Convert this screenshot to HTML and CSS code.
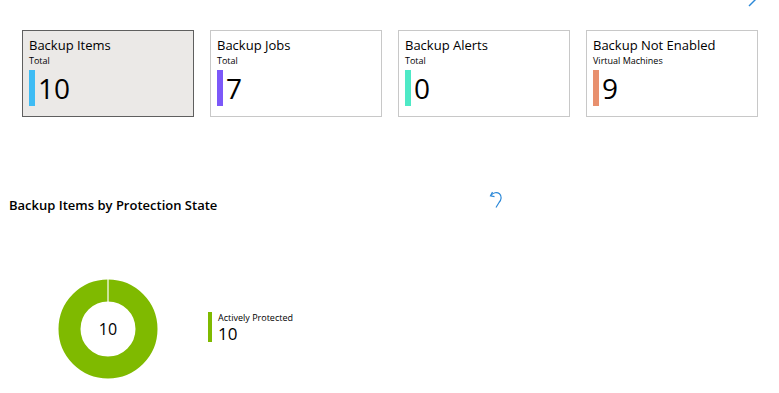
FILE: index.html
```html
<!DOCTYPE html>
<html lang="en">
<head>
  <meta charset="UTF-8">
  <title>Backup Dashboard</title>
  <link rel="stylesheet" href="styles.css">
</head>
<body>
  <div class="toolbar">
    <svg class="edit-icon" width="14" height="14" viewBox="0 0 14 14">
      <path d="M1 13 L13 1" stroke="#2b88d8" stroke-width="1.4" fill="none"/>
    </svg>
  </div>

  <div class="tiles">
    <div class="tile selected">
      <div class="tile-title">Backup Items</div>
      <div class="tile-sub">Total</div>
      <div class="tile-value">
        <span class="bar bar-blue"></span>
        <span class="number">10</span>
      </div>
    </div>
    <div class="tile">
      <div class="tile-title">Backup Jobs</div>
      <div class="tile-sub">Total</div>
      <div class="tile-value">
        <span class="bar bar-purple"></span>
        <span class="number">7</span>
      </div>
    </div>
    <div class="tile">
      <div class="tile-title">Backup Alerts</div>
      <div class="tile-sub">Total</div>
      <div class="tile-value">
        <span class="bar bar-teal"></span>
        <span class="number">0</span>
      </div>
    </div>
    <div class="tile">
      <div class="tile-title">Backup Not Enabled</div>
      <div class="tile-sub">Virtual Machines</div>
      <div class="tile-value">
        <span class="bar bar-salmon"></span>
        <span class="number">9</span>
      </div>
    </div>
  </div>

  <div class="chart-panel">
    <div class="chart-header">
      <h2>Backup Items by Protection State</h2>
      <svg class="refresh-icon" width="14" height="18" viewBox="0 0 14 18">
        <path d="M2 4.5 C4 1.5 8 0.8 10.5 2.8 C13 5 12.5 9 10 11.5 L7 16.5" stroke="#2b88d8" stroke-width="1.2" fill="none"/>
        <path d="M3.5 1 L1.5 4.8 L5.5 5.6" stroke="#2b88d8" stroke-width="1.2" fill="none"/>
      </svg>
    </div>

    <div class="chart-body">
      <div class="donut">
        <svg width="100" height="100" viewBox="0 0 100 100">
          <circle cx="50" cy="50" r="38.5" fill="none" stroke="#7fba00" stroke-width="22"/>
          <line x1="50" y1="0" x2="50" y2="23" stroke="#ffffff" stroke-width="1.2"/>
        </svg>
        <span class="donut-label">10</span>
      </div>
      <div class="legend">
        <span class="legend-bar"></span>
        <div class="legend-text">
          <div class="legend-name">Actively Protected</div>
          <div class="legend-value">10</div>
        </div>
      </div>
    </div>
  </div>
</body>
</html>
```

FILE: styles.css
```css
body {
  margin: 0;
  font-family: 'Open Sans', 'Noto Sans', sans-serif;
  color: #000000;
  background: #ffffff;
}

.toolbar {
  height: 30px;
  display: flex;
  justify-content: flex-end;
  padding-right: 17px;
}

.edit-icon {
  margin-top: -7px;
}

.tiles {
  display: flex;
  gap: 16px;
  padding-left: 22px;
}

.tile {
  box-sizing: border-box;
  width: 172px;
  height: 87px;
  border: 1px solid #c8c8c8;
  padding: 5px 6px;
  background: #ffffff;
}

.tile.selected {
  background: #ebe9e7;
  border-color: #5f5f5f;
}

.tile-title {
  font-size: 13px;
  line-height: 19px;
}

.tile-sub {
  font-size: 9px;
  line-height: 12px;
  color: #000000;
}

.tile-value {
  display: flex;
  align-items: center;
  gap: 3px;
  margin-top: 3px;
}

.bar {
  display: block;
  width: 6px;
  height: 36px;
}

.bar-blue { background: #3fbcf4; }
.bar-purple { background: #7c58f9; }
.bar-teal { background: #4ee9c6; }
.bar-salmon { background: #e8906e; }

.number {
  font-size: 28px;
  line-height: 36px;
}

.chart-panel {
  padding-top: 74px;
}

.chart-header {
  width: 494px;
  display: flex;
  justify-content: space-between;
  align-items: flex-start;
  padding-left: 9px;
}

.chart-header h2 {
  margin: 5px 0 0;
  font-size: 13px;
  font-weight: 600;
  line-height: 18px;
}

.chart-body {
  display: flex;
  align-items: center;
  padding: 65px 0 0 58px;
  gap: 50px;
}

.donut {
  position: relative;
  width: 100px;
  height: 100px;
}

.donut svg {
  display: block;
}

.donut-label {
  position: absolute;
  inset: 0;
  display: flex;
  align-items: center;
  justify-content: center;
  font-size: 16px;
}

.legend {
  display: flex;
  gap: 6px;
  margin-top: -2px;
}

.legend-bar {
  display: block;
  width: 4px;
  height: 30px;
  background: #7fba00;
}

.legend-name {
  font-size: 9px;
  line-height: 12px;
}

.legend-value {
  font-size: 17px;
  line-height: 20px;
}
```
